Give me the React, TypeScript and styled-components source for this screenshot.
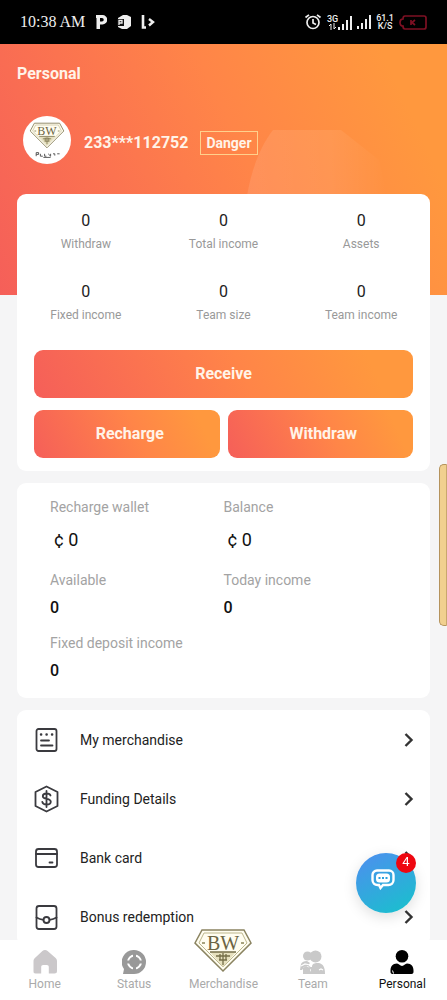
import React from "react";
import styled, { createGlobalStyle } from "styled-components";

const GlobalStyle = createGlobalStyle`
  *, *::before, *::after { box-sizing: border-box; }
  body {
    margin: 0;
    background: #f5f5f6;
    color: #222;
    font-family: Roboto, "Liberation Sans", sans-serif;
    font-size: 14px;
  }
  svg { display: block; flex-shrink: 0; }
`;

const brandGradient =
  "linear-gradient(65deg, #f55f59 0%, #fb7350 30%, #ff8548 55%, #ff983e 88%)";

const Screen = styled.div`
  display: flex;
  flex-direction: column;
  height: 100vh;
`;

const StatusBar = styled.header`
  display: flex;
  justify-content: space-between;
  align-items: center;
  flex: none;
  height: 44px;
  padding: 0 20px;
  background: #000;
  color: #eee;
`;

const StatusGroup = styled.div<{ $gap: number }>`
  display: flex;
  align-items: center;
  gap: ${(p) => p.$gap}px;
`;

const Clock = styled.time`
  font: 16px/20px "Liberation Serif", serif;
`;

const StackedLabel = styled.div`
  display: flex;
  flex-direction: column;
  align-items: center;
  font-size: 9px;
  font-weight: 500;
  line-height: 8px;
`;

const Signal = styled.div`
  display: flex;
  align-items: flex-end;
`;

const Main = styled.main`
  position: relative;
  flex: 1;
  min-height: 0;
  overflow-y: auto;
  scrollbar-width: none;
  padding: 0 17px;
  background: ${brandGradient} top / 100% 251px no-repeat;
`;

const Sheen = styled.svg`
  position: absolute;
  top: 82px;
  right: 40px;
`;

const Title = styled.h1`
  margin: 0;
  padding: 20px 0;
  color: #fff3e8;
  font-size: 16px;
  line-height: 20px;
`;

const Profile = styled.section`
  display: flex;
  align-items: center;
  padding: 12px 6px 30px;
  color: #fff3e8;
`;

const Avatar = styled.div`
  display: grid;
  place-items: center;
  width: 48px;
  height: 48px;
  border-radius: 50%;
  background: #fff;
`;

const Identity = styled.div`
  display: flex;
  align-items: center;
  gap: 12px;
  padding: 6px 0 0 13px;
`;

const UserId = styled.strong`
  font-size: 16px;
  line-height: 20px;
`;

const Tag = styled.span`
  padding: 0 5px;
  border: 1px solid #ffd08c;
  font-size: 14px;
  font-weight: 700;
  line-height: 22px;
`;

const Card = styled.section`
  position: relative;
  margin-bottom: 12px;
  border-radius: 9px;
  background: #fff;
`;

const Stats = styled.dl`
  display: grid;
  grid-template-columns: repeat(3, 1fr);
  row-gap: 28px;
  margin: 0;
  padding: 17px 0 25px;
`;

const Stat = styled.div`
  display: flex;
  flex-direction: column-reverse;
  gap: 3px;
  text-align: center;

  dt {
    color: #999;
    font-size: 12px;
    line-height: 20px;
  }
  dd {
    margin: 0;
    font-size: 16px;
    line-height: 20px;
  }
`;

const Actions = styled.div`
  display: grid;
  grid-template-columns: 1fr 1fr;
  gap: 12px 8px;
  padding: 0 17px 13px;
`;

const ActionButton = styled.button<{ $wide?: boolean }>`
  grid-column: ${(p) => (p.$wide ? "1 / -1" : "auto")};
  height: 48px;
  padding: 0 0 0 ${(p) => (p.$wide ? 0 : 6)}px;
  border: 0;
  border-radius: 9px;
  background: ${brandGradient};
  color: #fff3e8;
  font: 700 16px/20px Roboto, "Liberation Sans", sans-serif;
`;

const Wallet = styled.dl`
  display: grid;
  grid-template-columns: 1fr 1fr;
  row-gap: 15px;
  margin: 0;
  padding: 14px 33px 17px;
`;

const WalletItem = styled.div<{ $money?: boolean }>`
  dt {
    margin-bottom: 8px;
    color: #a3a3a3;
    font-size: 14px;
    line-height: 20px;
  }
  dd {
    margin: 0;
    padding-left: ${(p) => (p.$money ? 4 : 0)}px;
    color: #111;
    font-size: ${(p) => (p.$money ? 18 : 16)}px;
    font-weight: ${(p) => (p.$money ? 400 : 500)};
    line-height: ${(p) => (p.$money ? 30 : 20)}px;
  }
`;

const MenuLink = styled.a`
  display: flex;
  align-items: center;
  gap: 20px;
  height: 59px;
  padding: 0 16px;
  color: #222;
  font-size: 14px;
  text-decoration: none;

  span { flex: 1; }
`;

const Nav = styled.nav`
  position: relative;
  display: grid;
  grid-template-columns: repeat(5, 1fr);
  flex: none;
  height: 60px;
  padding-top: 10px;
  background: #fff;
`;

const NavLink = styled.a<{ $active?: boolean }>`
  display: flex;
  flex-direction: column;
  align-items: center;
  gap: 2px;
  color: ${(p) => (p.$active ? "#111" : "#aaa")};
  font-size: 12px;
  line-height: 16px;
  text-decoration: none;
`;

const NavIcon = styled.span`
  display: flex;
  align-items: flex-end;
  height: 24px;
`;

const ChatButton = styled.button`
  position: fixed;
  right: 31px;
  bottom: 87px;
  display: grid;
  place-items: center;
  width: 60px;
  height: 60px;
  padding: 0 6px 8px 0;
  border: 0;
  border-radius: 50%;
  background: linear-gradient(150deg, #4f8df0, #16c3cb);
  box-shadow: 0 4px 14px rgba(0, 0, 0, 0.13);
`;

const Badge = styled.span`
  position: absolute;
  top: 0;
  right: 0;
  width: 20px;
  height: 20px;
  border-radius: 50%;
  background: #ee0710;
  color: #fff;
  font: 13px/18px Roboto, sans-serif;
  text-align: center;
`;

const EdgeHandle = styled.div`
  position: fixed;
  top: 464px;
  right: 0;
  width: 8px;
  height: 162px;
  border: 1px solid #b5935d;
  border-right-color: #c9a76d;
  border-radius: 5px 0 0 5px;
  background: #f1d08f;
`;

const Diamond = ({ width, height, caption }: { width: number; height: number; caption?: boolean }) => (
  <svg width={width} height={height} viewBox={caption ? "0 0 60 60" : "0 0 60 46"} fill="none">
    <path d="M2 15 9 2h42l7 13-28 28Z" fill="#fffdf0" stroke="#8a8360" strokeWidth="1.5" />
    <path d="M6 15 11 5h38l5 10-24 24Z" stroke="#bdb78d" strokeWidth="1" />
    <path d="m17 24 13 15 13-15Z" fill="#e6e0bd" />
    <path d="M17 24h26M23 28h14M26 32h8M27 26v6M30 25v12M33 26v6" stroke="#756e48" strokeWidth="1.3" />
    <path d="M9 15h3M48 15h3" stroke="#8b8455" strokeWidth="1.5" />
    <text x="30" y="22" textAnchor="middle" fontFamily="Liberation Serif, serif" fontSize="20" fill="#6b6443">BW</text>
    {caption && (
      <path d="M12 51v6m0-6h4v3h-4M19 53v4h4M26 53v4h3m3-4 4 4v-4M40 53h3v3M47 53h4M24 59h12" stroke="#555" strokeWidth="1.6" />
    )}
  </svg>
);

const SignalBars = () => (
  <svg width="14" height="14" viewBox="0 0 14 14" fill="#eee">
    <path d="M0 11h2v3H0ZM4 8h2v6H4ZM8 4h2v10H8ZM12 0h2v14h-2Z" />
  </svg>
);

const Chevron = () => (
  <svg width="10" height="14" viewBox="0 0 10 14" fill="none" stroke="#333" strokeWidth="2.4">
    <path d="m1.5 1 6 6-6 6" />
  </svg>
);

const LineIcon = ({ children }: { children: React.ReactNode }) => (
  <svg width="27" height="28" viewBox="0 0 27 28" fill="none" stroke="#3a3a3f" strokeWidth="1.8" strokeLinecap="round" strokeLinejoin="round">
    {children}
  </svg>
);

const menu = [
  {
    label: "My merchandise",
    icon: (
      <LineIcon>
        <rect x="3.5" y="3" width="20" height="22" rx="2" />
        <path d="M8 8.5h.2M13.5 8.5h.2M19 8.5h.2" strokeWidth="2.4" />
        <path d="M8 14.5h8M8 19.5h11.5" />
      </LineIcon>
    ),
  },
  {
    label: "Funding Details",
    icon: (
      <LineIcon>
        <path d="M13.5 1.5 24.5 7v14l-11 5.5L2.5 21V7Z" />
        <path d="M17.5 10.500c-.4-1.500-2-2-4-2s-3.700.9-3.700 2.700c0 3.800 8 1.700 8 5.500 0 1.900-2 2.800-4.200 2.800-2.300 0-4-.8-4.300-2.600M13.500 6v16" />
      </LineIcon>
    ),
  },
  {
    label: "Bank card",
    icon: (
      <LineIcon>
        <rect x="3" y="5" width="21" height="18" rx="2.5" />
        <path d="M3 10h21M16.5 18.5h3" />
      </LineIcon>
    ),
  },
  {
    label: "Bonus redemption",
    icon: (
      <LineIcon>
        <rect x="3.5" y="3" width="20" height="23" rx="2.5" />
        <circle cx="13.5" cy="17" r="3" />
        <path d="M3.5 14.5c2.500 1.500 4.500 2 7 2.300M23.5 14.5c-2.500 1.500-4.500 2-7 2.300" />
      </LineIcon>
    ),
  },
];

const stats = ["Withdraw", "Total income", "Assets", "Fixed income", "Team size", "Team income"];

const wallet = [
  { label: "Recharge wallet", value: "¢ 0", money: true },
  { label: "Balance", value: "¢ 0", money: true },
  { label: "Available", value: "0" },
  { label: "Today income", value: "0" },
  { label: "Fixed deposit income", value: "0" },
];

const tabs = [
  {
    label: "Home",
    icon: (
      <svg width="24" height="24" viewBox="0 0 24 24" fill="#cbc8ca">
        <path d="M12 0c1 0 1.800.4 2.600 1.100l8 6.800c1 .9 1.400 2 1.400 3.300V21c0 1.800-1 2.500-2.500 2.500h-5.700V17c0-1.300-.7-2-2-2h-3.600c-1.300 0-2 .7-2 2v6.500H2.500C1 23.500.5 22.800.5 21v-9.800c0-1.300.4-2.400 1.400-3.300l7.500-6.800C10.200.4 11 0 12 0Z" />
      </svg>
    ),
  },
  {
    label: "Status",
    icon: (
      <svg width="24" height="24" viewBox="0 0 24 24" fill="none">
        <path d="M12 0a12 12 0 1 1 0 24H1l1-5A12 12 0 0 1 12 0Z" fill="#999" />
        <circle cx="12.5" cy="12" r="6.5" stroke="#fff" strokeWidth="2" />
        <path d="M12.5 3v6M12.5 15v6M3.5 12h6M15.5 12h6" stroke="#999" strokeWidth="3" />
        <path d="m12.5 8 4 4-4 4-4-4Z" fill="#999" />
      </svg>
    ),
  },
  { label: "Merchandise", icon: <Diamond width={60} height={46} /> },
  {
    label: "Team",
    icon: (
      <svg width="26" height="24" viewBox="0 0 26 24" fill="#c9c9c9">
        <circle cx="7.5" cy="6" r="4.5" />
        <circle cx="15.5" cy="6.5" r="6" />
        <path d="M1 14c1-2 3-3 6-3l3 2c-2 2-1 4 2 4v7H9l2-4-3-4-4 1-2 3H0ZM12 16c1-3 3-3 7-3 4 1 6 4 6 11H12Z" />
        <path d="m3 18 3-2 4 2v6H3Z" />
        <path d="m19 20 2-1 2 1M1 16l4-2 5 1" stroke="#fff" strokeWidth="1.2" fill="none" />
      </svg>
    ),
  },
  {
    label: "Personal",
    active: true,
    icon: (
      <svg width="24" height="24" viewBox="0 0 24 24" fill="#000">
        <circle cx="12" cy="6.3" r="6.3" />
        <path d="M7 13.5c2 0 3 2.500 5 2.500s3-2.500 5-2.500c4.500 0 6.500 3 6.500 7V22c0 1.200-.8 2-2 2h-19C1.300 24 .5 23.200.5 22v-1.500c0-4 2-7 6.500-7Z" />
        <path d="m2.5 20.5 1 3" stroke="#fff" strokeWidth="1" />
      </svg>
    ),
  },
];

export default function App() {
  return (
    <Screen>
      <GlobalStyle />
      <StatusBar>
        <StatusGroup $gap={10}>
          <Clock>10:38 AM</Clock>
          <svg width="12" height="14" viewBox="0 0 12 14">
            <path fillRule="evenodd" d="M1 0h6.500a4.500 4.500 0 0 1 0 9.500H5V14H1.500V3H1ZM5 3v3.500h2a1.700 1.700 0 0 0 0-3.500Z" fill="#eee" />
          </svg>
          <svg width="14" height="14" viewBox="0 0 14 14">
            <path d="M6 0h4l4 2v9l-4 3H5l-4-2V3Z" fill="#eee" />
            <path d="M0 4h7v7H0Z" fill="#111" />
            <path d="M2 10V5.500h3V8H2" fill="none" stroke="#eee" strokeWidth="1.3" />
          </svg>
          <svg width="14" height="14" viewBox="0 0 14 14" fill="none" stroke="#eee">
            <path d="M2 0v12.500h3" strokeWidth="2.6" />
            <path d="m8 4 4 3-4 3.500" strokeWidth="2.4" />
          </svg>
        </StatusGroup>
        <StatusGroup $gap={5}>
          <svg width="18" height="16" viewBox="0 0 18 16" fill="none" stroke="#eee" strokeWidth="1.7">
            <circle cx="9" cy="8.5" r="6" />
            <path d="M9 5v4l3 1.500M1.500 3.500 5 .8M16.500 3.500 13 .8" />
          </svg>
          <Signal>
            <StackedLabel>
              <span>3G</span>
              <svg width="7" height="7" viewBox="0 0 7 7" stroke="#eee" fill="none">
                <path d="M2 7V1L0 3M5 0v6l2-2" />
              </svg>
            </StackedLabel>
            <SignalBars />
          </Signal>
          <SignalBars />
          <StackedLabel>
            <span>61.1</span>
            <span>K/S</span>
          </StackedLabel>
          <svg width="28" height="15" viewBox="0 0 28 15" fill="none" stroke="#7e1023" strokeWidth="1.7">
            <path d="M6 1h19a2 2 0 0 1 2 2v9a2 2 0 0 1-2 2H6q-2 0-2-3-3 0-3-3.500T4 4q0-3 2-3Z" />
            <path d="M12 5v5M16 5l-3 2.500 3 2.500" />
          </svg>
        </StatusGroup>
      </StatusBar>

      <Main>
        <Sheen width="160" height="70" viewBox="0 0 160 70">
          <defs>
            <linearGradient id="sheen">
              <stop offset="0" stopColor="#fff" stopOpacity=".1" />
              <stop offset=".6" stopColor="#fff" stopOpacity=".08" />
              <stop offset="1" stopColor="#fff" stopOpacity="0" />
            </linearGradient>
          </defs>
          <path d="M26 4h68l38 30 8 36H0C4 46 12 22 26 4Z" fill="url(#sheen)" />
        </Sheen>
        <Title>Personal</Title>
        <Profile>
          <Avatar>
            <Diamond width={36} height={36} caption />
          </Avatar>
          <Identity>
            <UserId>233***112752</UserId>
            <Tag>Danger</Tag>
          </Identity>
        </Profile>

        <Card>
          <Stats>
            {stats.map((label) => (
              <Stat key={label}>
                <dt>{label}</dt>
                <dd>0</dd>
              </Stat>
            ))}
          </Stats>
          <Actions>
            <ActionButton $wide>Receive</ActionButton>
            <ActionButton>Recharge</ActionButton>
            <ActionButton>Withdraw</ActionButton>
          </Actions>
        </Card>

        <Card>
          <Wallet>
            {wallet.map((item) => (
              <WalletItem key={item.label} $money={item.money}>
                <dt>{item.label}</dt>
                <dd>{item.value}</dd>
              </WalletItem>
            ))}
          </Wallet>
        </Card>

        <Card>
          {menu.map((item) => (
            <MenuLink key={item.label} href="#">
              {item.icon}
              <span>{item.label}</span>
              <Chevron />
            </MenuLink>
          ))}
        </Card>
      </Main>

      <Nav>
        {tabs.map((tab) => (
          <NavLink key={tab.label} href="#" $active={tab.active}>
            <NavIcon>{tab.icon}</NavIcon>
            {tab.label}
          </NavLink>
        ))}
      </Nav>

      <EdgeHandle />
      <ChatButton aria-label="Messages">
        <svg width="24" height="21" viewBox="0 0 24 21" fill="none" stroke="#fff">
          <path d="M6 1.500h12a4.500 4.500 0 0 1 4.500 4.500v5a5 5 0 0 1-5 5H12l-2.500 3-1.500-3H6.500a5 5 0 0 1-5-5V6A4.500 4.500 0 0 1 6 1.500Z" strokeWidth="2.4" />
          <rect x="5" y="4.5" width="14" height="9" rx="3.5" fill="#fff" stroke="none" />
          <path d="M7.500 9h2M11 9h2M14.500 9h2" stroke="#2b9fdd" strokeWidth="2.2" />
        </svg>
        <Badge>4</Badge>
      </ChatButton>
    </Screen>
  );
}
